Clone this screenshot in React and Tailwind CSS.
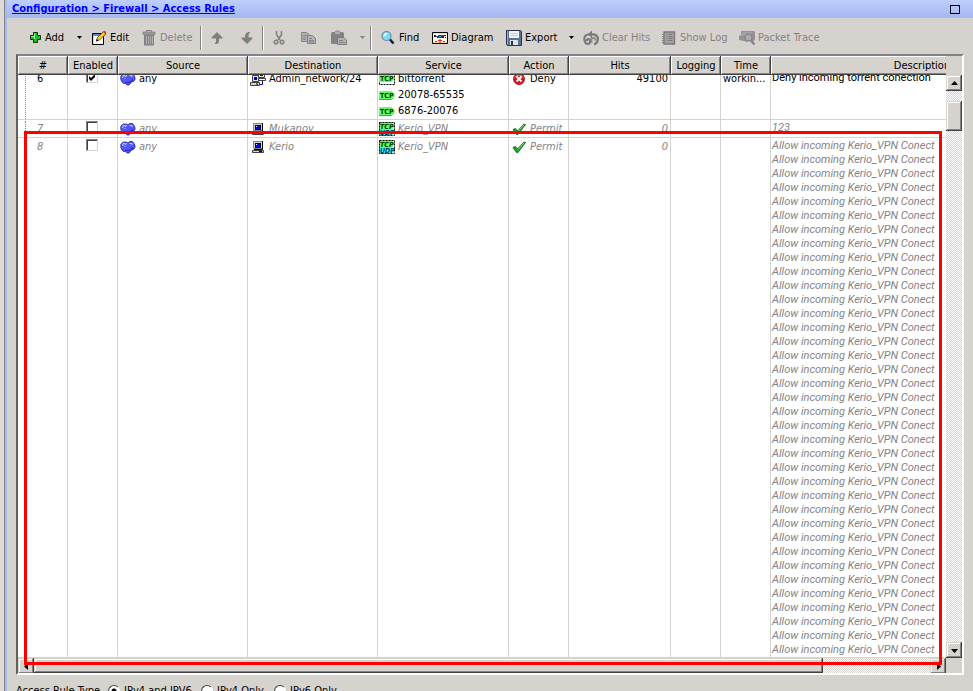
import React from 'react';

const columns = [
  { name: '#', width: 'w-[50px]' },
  { name: 'Enabled', width: 'w-[50px]' },
  { name: 'Source', width: 'w-[130px]' },
  { name: 'Destination', width: 'w-[130px]' },
  { name: 'Service', width: 'w-[131px]' },
  { name: 'Action', width: 'w-[60px]' },
  { name: 'Hits', width: 'w-[102px]' },
  { name: 'Logging', width: 'w-[50px]' },
  { name: 'Time', width: 'w-[50px]' },
  { name: 'Description', width: 'w-[302px]' },
];

const rules = [
  {
    id: 6,
    enabled: true,
    source: 'any',
    destination: { name: 'Admin_network/24', icon: 'network' },
    services: [
      { name: 'bittorrent', icon: 'group' },
      { name: '20078-65535', icon: 'tcp' },
      { name: '6876-20076', icon: 'tcp' },
    ],
    action: 'Deny',
    hits: 49100,
    time: 'workin...',
    description: ['Deny incoming torrent conection'],
  },
  {
    id: 7,
    enabled: false,
    source: 'any',
    destination: { name: 'Mukanov', icon: 'host' },
    services: [{ name: 'Kerio_VPN', icon: 'tcpudp' }],
    action: 'Permit',
    hits: 0,
    time: '',
    description: ['123'],
  },
  {
    id: 8,
    enabled: false,
    source: 'any',
    destination: { name: 'Kerio', icon: 'host' },
    services: [{ name: 'Kerio_VPN', icon: 'tcpudp' }],
    action: 'Permit',
    hits: 0,
    time: '',
    description: Array(37).fill('Allow incoming Kerio_VPN Conect'),
  },
];

const RAISED =
  'bg-[#d6d3ce] shadow-[inset_-1px_-1px_0_#424142,inset_1px_1px_0_#d6d3ce,inset_-2px_-2px_0_#848284,inset_2px_2px_0_#ffffff]';
const TRACK =
  'bg-[conic-gradient(#ffffff_25%,#d6d3ce_0_50%,#ffffff_0_75%,#d6d3ce_0)] bg-[length:2px_2px]';

function Icon({ children }) {
  return (
    <svg className="w-4 h-4 shrink-0" viewBox="0 0 16 16" fill="none" aria-hidden="true">
      {children}
    </svg>
  );
}

/* ---------- toolbar icons ---------- */

const AddIcon = () => (
  <Icon>
    <path d="M7.500 2.500h4v3h3v4h-3v3h-4v-3h-3v-4h3z" fill="#18c321" stroke="#003800" />
    <path d="M8.500 9V3.500M5.500 6.500h3" stroke="#9cff9c" />
  </Icon>
);

const EditIcon = () => (
  <Icon>
    <path d="M1.500 3.500h11v11h-11z" fill="#fff" stroke="#000" />
    <path d="M2 5h10" stroke="#4a8ee7" strokeWidth="2" />
    <path d="M2.500 6v8" stroke="#bddbff" />
    <path d="M4 13.500h8" stroke="#e7efff" />
    <path d="M5.500 10.500l1-3 6-6 2.500 2.500-6.500 6z" fill="#ffc731" stroke="#5a3a00" strokeWidth=".8" />
    <path d="M12 2l1.500-1.500 2 2L14 4z" fill="#c64a31" />
    <path d="M5 11.500l.8-2.500 1.700 1.700z" fill="#000" />
  </Icon>
);

const TrashIcon = () => (
  <Icon>
    <path d="M5.500 2.500v-2h5v2" stroke="#848284" />
    <path d="M2 2h12v2.500H2z" fill="#9c9a9c" stroke="#848284" strokeWidth=".8" />
    <path d="M3 5h10v10.500H3z" fill="#848284" />
    <path d="M5.500 6v8M7.500 6v8M9.500 6v8M11.500 6v8" stroke="#b5b2ad" />
  </Icon>
);

const UpIcon = () => (
  <Icon>
    <path d="M8 2l5.500 5.500v1H10V12c-.5 1.500-1.500 2-4 2v-1c1-.5 1-1 1-2V8.500H2.500v-1z" fill="#7b827b" />
  </Icon>
);

const DownIcon = () => (
  <Icon>
    <path d="M8 14L2.500 8.500v-1H6V6c.5-3 2-4 4-4h1v1C9.500 3.500 9.500 5 9.500 7.500h4v1z" fill="#7b827b" />
  </Icon>
);

const CutIcon = () => (
  <Icon>
    <path d="M5.500 1v3.500L9 10M10.500 1v3.500L7 10" stroke="#848284" strokeWidth="1.600" />
    <circle cx="5" cy="12" r="1.800" stroke="#848284" strokeWidth="1.500" />
    <circle cx="11" cy="12" r="1.800" stroke="#848284" strokeWidth="1.500" />
  </Icon>
);

const CopyIcon = () => (
  <Icon>
    <path d="M.5 2.500h5l3 2.500v6.500h-8z" fill="#b5b2b5" stroke="#848284" />
    <path d="M2 5.500h4M2 7.500h3M2 9.500h3" stroke="#848284" />
    <path d="M6.500 5.500h5l3 3v5h-8z" fill="#b5b2b5" stroke="#848284" />
    <path d="M8 8.500h3M8 10.500h5M8 12h5" stroke="#848284" />
  </Icon>
);

const PasteIcon = () => (
  <Icon>
    <path d="M0 3.500L1 2h11l1 1.500V13l-1 1H1l-1-1z" fill="#848284" />
    <path d="M3.500 2.500l2-1.500h2l2 1.500v2h-6z" fill="#b5b2b5" stroke="#848284" />
    <path d="M6.500 7.500h6l3 2.500v4.500h-9z" fill="#b5b2b5" stroke="#7b797b" />
    <path d="M8 10.500h4M8 12.500h6" stroke="#848284" />
  </Icon>
);

const FindIcon = () => (
  <Icon>
    <circle cx="6.500" cy="6" r="4.500" fill="#7bdbff" stroke="#6b8a94" strokeWidth="1.200" />
    <path d="M3.500 6.500A3 3 0 017 3l-1 2.500z" fill="#fff" />
    <path d="M10 9.500l3.500 4" stroke="#08243a" strokeWidth="2.500" />
  </Icon>
);

const DiagramIcon = () => (
  <Icon>
    <path d="M.5 2.500h15v11H.5z" fill="#fff7e7" stroke="#000" />
    <path d="M1 3.500h14M1 12.500h14" stroke="#ffd7a5" />
    <path d="M2 5h2v2H2zM5 7h1v1H5zM10 6h2v2h-2zM12 5h2v1h-2zM13 7h1v1h-1z" fill="#212021" />
    <path d="M4 6.500h2M10 5.500h2" stroke="#525152" />
    <path d="M6.500 5.500h3v2h-3z" fill="#31c6f7" stroke="#003863" />
    <path d="M3 11.500h2M6 10.500h4M11 11.500h2M8 9v4" stroke="#f02818" />
  </Icon>
);

const SaveIcon = () => (
  <Icon>
    <path d="M.5.5h14l1 1v14H1.500l-1-1z" fill="#5a7194" stroke="#29344a" />
    <path d="M1.500 1v13" stroke="#94aac6" />
    <path d="M3 1h10v7H3z" fill="#eff3f7" />
    <path d="M4.500 3.500h7M4.500 5.500h7" stroke="#c6cbd6" />
    <path d="M4 10h8v5H4z" fill="#dee3e7" />
    <path d="M5 11h2v4H5z" fill="#29344a" />
  </Icon>
);

const ClearHitsIcon = () => (
  <Icon>
    <path d="M4.500 4.500L9 .5v7z" fill="#7b797b" />
    <path d="M6 4.500C2 4.500 1 7 1.500 10c.5 3 2 4 3.500 4s2.500-1.500 2-3.500S4 8.500 3.500 11" stroke="#7b797b" strokeWidth="2.200" />
    <path d="M8.500 4.500c4-.5 6.500 1.500 6.300 4.500-.3 3-2 5-3.800 5" stroke="#7b797b" strokeWidth="2.400" />
    <path d="M8.500 7v6M9 8.500c1.500-1.500 3.500-.5 3 2" stroke="#8c8a8c" strokeWidth="1.800" />
  </Icon>
);

const LogIcon = () => (
  <Icon>
    <path d="M3 2h10.500v12H3z" fill="#a5a2a5" stroke="#7b797b" strokeWidth="1.400" />
    <path d="M1 4.500h3M1 6.500h3M1 8.500h3M1 10.500h3M1 12.500h3" stroke="#848284" />
    <path d="M5.500 4.500h1M7.500 4.500h4M5.500 6.500h1M7.500 6.500h4M5.500 8.500h1M7.500 8.500h4M5.500 10.500h1M7.500 10.500h4" stroke="#7b797b" />
  </Icon>
);

const TraceIcon = () => (
  <Icon>
    <path d="M2 1h13l1 1v8l-2 1H9l-1 1-3-1-5-1V6l2-1z" fill="#949294" />
    <path d="M1 6l3-4h10l-3 4z" fill="#a5a2a5" />
    <circle cx="9.500" cy="7.500" r="3.500" fill="#adaaad" stroke="#848284" strokeWidth="1.200" />
    <path d="M12 10.500l3.500 4" stroke="#848284" strokeWidth="2.500" />
  </Icon>
);

/* ---------- table icons ---------- */

const AnyIcon = () => (
  <Icon>
    <path
      d="M3.500 3h3l1.500 1 1.500-1.500h3L14 4.500l1 2v2l-1.500 2-2 .5L9 14H7l-1.500-1.500h-2L2 11 .800 8.500v-3L2 4z"
      fill="#5255f7"
      stroke="#2124a5"
      strokeWidth=".8"
    />
    <path d="M2 6.500h1v-2h2v1h1v-1h1M4.500 7.500h1M9.500 4.500h3M11.500 5.500h1" stroke="#bdc7ff" />
    <path d="M5 11.500h5l3-3" stroke="#2928c6" strokeWidth="1.200" />
  </Icon>
);

const HostIcon = () => (
  <Icon>
    <path d="M3.500 2.500h9v7h-9z" fill="#d6d3ce" stroke="#848284" />
    <path d="M12.500 2v8.500H4" stroke="#000" />
    <path d="M5 4h6v5H5z" fill="#000" />
    <path d="M6 5h4v3H6z" fill="#0000ff" />
    <path d="M6 5h1v1H6z" fill="#fff" />
    <path d="M2.500 11.500h11v2h-11z" fill="#d6d3ce" stroke="#424142" />
    <path d="M9 12.500h3" stroke="#000" />
  </Icon>
);

const NetworkIcon = () => (
  <Icon>
    <path d="M8.500.5h6v6h-6z" fill="#e7e7e7" stroke="#424142" />
    <path d="M10 2h3v3h-3z" fill="#0000d6" />
    <path d="M8.500 7.500h7v2h-7z" fill="#fff" stroke="#424142" />
    <path d="M12.500 10v3.500H10" stroke="#0808c6" />
    <path d="M2.500 4.500h6v6h-6z" fill="#e7e7e7" stroke="#424142" />
    <path d="M4 6h3v3H4z" fill="#0000d6" />
    <path d="M.5 11.500h9v3h-9z" fill="#d6d3ce" stroke="#424142" />
    <path d="M6 13h2" stroke="#000" />
  </Icon>
);

function Tag({ label, y, fill, color }) {
  return (
    <>
      <path d={`M0 ${y}h12.500l3.500 4-3.500 4H0z`} fill={fill} />
      <text x="1" y={y + 7} fontSize="7" fontWeight="bold" fontFamily="DejaVu Sans Condensed" fill={color}>
        {label}
      </text>
    </>
  );
}

const TcpIcon = () => (
  <Icon>
    <path d="M0 12.500h12.500l3-4" stroke="#31b531" />
    <Tag label="TCP" y={4} fill="#63ff63" color="#003800" />
  </Icon>
);

const GroupIcon = () => (
  <Icon>
    <path d="M.5 1.500h15v12H.5z" fill="#fff" stroke="#000" strokeDasharray="2 1" />
    <Tag label="TCP" y={3} fill="#63ff63" color="#003800" />
  </Icon>
);

const TcpUdpIcon = () => (
  <Icon>
    <path d="M0 0h16v16H0z" fill="#fff" />
    <Tag label="UDP" y={7} fill="#42f7ff" color="#00415a" />
    <Tag label="TCP" y={1} fill="#63ff63" color="#003800" />
    <path d="M.5 1.500h15v13H.5z" stroke="#000" strokeDasharray="2 1" />
  </Icon>
);

const DenyIcon = () => (
  <Icon>
    <circle cx="8" cy="8" r="5.500" fill="#d61818" stroke="#8c1010" strokeWidth=".8" />
    <path d="M4 6.500a4.500 4.500 0 018 0" stroke="#f78c84" />
    <path d="M5.500 5.500l5 5M10.500 5.500l-5 5" stroke="#fff" strokeWidth="1.800" />
  </Icon>
);

const PermitIcon = () => (
  <Icon>
    <path d="M2 8.500l2.500-1 2 2.500L13 3l1.500.5L7 13.500H5.500z" fill="#21a529" stroke="#085a10" strokeWidth=".8" />
    <path d="M7 10.500l6-6.500" stroke="#8ce78c" strokeWidth=".8" />
  </Icon>
);

const serviceIcons = { tcp: TcpIcon, group: GroupIcon, tcpudp: TcpUdpIcon };

/* ---------- toolbar ---------- */

function ToolButton({ icon: IconComponent, label, title, width, disabled }) {
  return (
    <button
      type="button"
      disabled={disabled}
      aria-label={title}
      className={`flex items-center gap-[3px] h-6 shrink-0 whitespace-nowrap disabled:text-[#848284] ${label ? '' : 'justify-center'} ${width}`}
    >
      <IconComponent />
      {label}
    </button>
  );
}

function DropButton({ title, disabled }) {
  return (
    <button
      type="button"
      disabled={disabled}
      aria-label={title}
      className="flex items-center justify-center w-4 h-6 shrink-0 disabled:text-[#848284]"
    >
      <svg className="w-[5px] h-[3px]" viewBox="0 0 5 3" aria-hidden="true">
        <path d="M0 0h5L2.500 3z" fill="currentColor" />
      </svg>
    </button>
  );
}

const Separator = () => <div className="w-[2px] h-6 shrink-0 bg-[#848284] border-r border-white" />;

function Toolbar() {
  return (
    <div className="flex items-center h-9 pl-[19px] pt-[3px]">
      <ToolButton icon={AddIcon} label="Add" width="w-[45px]" />
      <DropButton title="Add options" />
      <ToolButton icon={EditIcon} label="Edit" width="ml-1 w-[50px]" />
      <ToolButton icon={TrashIcon} label="Delete" width="w-[59px]" disabled />
      <Separator />
      <ToolButton icon={UpIcon} title="Move up" width="w-[30px]" disabled />
      <ToolButton icon={DownIcon} title="Move down" width="w-[30px]" disabled />
      <Separator />
      <ToolButton icon={CutIcon} title="Cut" width="w-[30px]" disabled />
      <ToolButton icon={CopyIcon} title="Copy" width="w-[30px]" disabled />
      <ToolButton icon={PasteIcon} title="Paste" width="w-[30px]" disabled />
      <DropButton title="Paste options" disabled />
      <Separator />
      <ToolButton icon={FindIcon} label="Find" width="ml-2 w-[52px]" />
      <ToolButton icon={DiagramIcon} label="Diagram" width="w-[74px]" />
      <ToolButton icon={SaveIcon} label="Export" width="w-[57px]" />
      <DropButton title="Export options" />
      <ToolButton icon={ClearHitsIcon} label="Clear Hits" width="ml-1 w-[78px]" disabled />
      <ToolButton icon={LogIcon} label="Show Log" width="w-[78px]" disabled />
      <ToolButton icon={TraceIcon} label="Packet Trace" width="w-[90px]" disabled />
    </div>
  );
}

/* ---------- rules table ---------- */

function ColGroup() {
  return (
    <colgroup>
      {columns.map((col) => (
        <col key={col.name} className={col.width} />
      ))}
    </colgroup>
  );
}

function Entry({ icon: IconComponent, children }) {
  return (
    <div className="flex items-center gap-[3px] h-4 whitespace-nowrap">
      <IconComponent />
      {children}
    </div>
  );
}

function RuleRow({ rule }) {
  const cell = `align-top border-r border-b border-[#d6d3ce] ${rule.enabled ? 'pt-0' : 'pt-px'}`;
  return (
    <tr className={rule.enabled ? '' : 'italic text-[#848284]'}>
      <td className={`${cell} h-px pl-[7px]`}>
        <div className={`h-full pl-[11px] leading-4 ${rule.id < 8 ? 'border-l border-dotted border-[#848284]' : 'ml-px'}`}>
          {rule.id}
        </div>
      </td>
      <td className={`${cell} pr-px`}>
        <label className="relative block w-3 h-3 mx-auto">
          <input
            type="checkbox"
            defaultChecked={rule.enabled}
            aria-label={`Enable rule ${rule.id}`}
            className="peer block appearance-none w-3 h-3 bg-white border border-[#d6d3ce] border-t-[#848284] border-l-[#848284] shadow-[inset_1px_1px_0_#424142]"
          />
          <svg className="absolute inset-0 hidden peer-checked:block" viewBox="0 0 12 12" aria-hidden="true">
            <path d="M3 5v3l2 2 4-4V3L5 7z" fill="#000" />
          </svg>
        </label>
      </td>
      <td className={`${cell} pl-[2px]`}>
        <Entry icon={AnyIcon}>{rule.source}</Entry>
      </td>
      <td className={`${cell} pl-[2px]`}>
        <Entry icon={rule.destination.icon === 'host' ? HostIcon : NetworkIcon}>{rule.destination.name}</Entry>
      </td>
      <td className={`${cell} pl-px`}>
        {rule.services.map((service) => (
          <Entry key={service.name} icon={serviceIcons[service.icon]}>
            {service.name}
          </Entry>
        ))}
      </td>
      <td className={`${cell} pl-[2px]`}>
        <Entry icon={rule.action === 'Deny' ? DenyIcon : PermitIcon}>{rule.action}</Entry>
      </td>
      <td className={`${cell} pr-[2px] text-right leading-4`}>{rule.hits}</td>
      <td className={cell}></td>
      <td className={`${cell} pl-[2px] leading-4 whitespace-nowrap`}>{rule.time}</td>
      <td className={`${cell} pl-px leading-[14px] font-[Roboto,sans-serif]`}>
        {rule.description.map((line, i) => (
          <div key={i} className="whitespace-nowrap">{line}</div>
        ))}
      </td>
    </tr>
  );
}

function ScrollButton({ title, path }) {
  return (
    <button type="button" aria-label={title} className={`flex items-center justify-center w-4 h-4 shrink-0 ${RAISED}`}>
      <svg className="w-[7px] h-[7px]" viewBox="0 0 7 7" aria-hidden="true">
        <path d={path} fill="#000" />
      </svg>
    </button>
  );
}

function RulesTable() {
  return (
    <div className="relative border-2 border-t-[#848284] border-l-[#63615a] border-r-white border-b-white">
      <div className="flex">
        <div className="flex-1 min-w-0 overflow-hidden">
          <table className="relative z-10 table-fixed w-[1055px] border-separate border-spacing-0">
            <ColGroup />
            <thead>
              <tr>
                {columns.map((col) => (
                  <th
                    key={col.name}
                    className="h-[19px] p-0 font-normal text-center bg-[#d6d3ce] shadow-[inset_-1px_-1px_0_#424142,inset_1px_1px_0_#ffffff,inset_-2px_-2px_0_#848284]"
                  >
                    {col.name}
                  </th>
                ))}
              </tr>
            </thead>
          </table>
          {/* list is scrolled a few pixels under the header */}
          <table className="-mt-1 table-fixed w-[1055px] border-separate border-spacing-0 bg-white">
            <ColGroup />
            <tbody>
              {rules.map((rule) => (
                <RuleRow key={rule.id} rule={rule} />
              ))}
            </tbody>
          </table>
        </div>
        <div className={`flex flex-col w-4 shrink-0 border-t-[19px] border-[#d6d3ce] ${TRACK}`}>
          <ScrollButton title="Scroll up" path="M0 5h7L3.500 1z" />
          <div className={`mt-[10px] h-[30px] ${RAISED}`} />
          <div className="flex-1" />
          <ScrollButton title="Scroll down" path="M0 2h7L3.500 6z" />
        </div>
      </div>
      <div className="flex h-[15px] overflow-hidden">
        <div className={`flex flex-1 ${TRACK}`}>
          <ScrollButton title="Scroll left" path="M5 0v7L1 3.500z" />
          <div className={`w-[85%] ${RAISED}`} />
          <div className="flex-1" />
          <ScrollButton title="Scroll right" path="M2 0v7l4-3.500z" />
        </div>
        <div className="w-4 shrink-0 bg-[#d6d3ce]" />
      </div>
      {/* highlight around rule 8 */}
      <div className="absolute z-20 top-[75px] bottom-2 left-[6px] right-5 border-[3px] border-[#ff0000] pointer-events-none" />
    </div>
  );
}

function RuleType() {
  const options = [
    { name: 'IPv4 and IPV6', width: 'w-[93px]' },
    { name: 'IPv4 Only', width: 'w-[73px]' },
    { name: 'IPv6 Only', width: 'w-[73px]' },
  ];
  return (
    <fieldset className="flex items-center mt-2 h-4 whitespace-nowrap">
      <legend className="float-left w-[92px]">Access Rule Type</legend>
      {options.map((option, i) => (
        <label key={option.name} className={`flex items-center gap-1 ${option.width}`}>
          <input
            type="radio"
            name="rule-type"
            defaultChecked={i === 0}
            className="appearance-none w-3 h-3 shrink-0 rounded-full bg-white border border-white border-t-[#424142] border-l-[#424142] checked:bg-[radial-gradient(circle,#000_2px,#fff_3px)]"
          />
          {option.name}
        </label>
      ))}
    </fieldset>
  );
}

export default function App() {
  return (
    <div className="flex h-screen overflow-hidden bg-[#d6d3ce] text-black text-[11px] leading-4 font-['DejaVu_Sans_Condensed','DejaVu_Sans',sans-serif]">
      <div className="w-[7px] shrink-0 bg-[#a5baef] border-l-4 border-[#dedbd6]">
        <div className="w-px h-full bg-[#848284]" />
      </div>
      <main className="flex-1 min-w-0">
        <header className="flex items-center justify-between h-[18px] pl-[5px] pr-[13px] bg-linear-to-b from-[#bdcfff] to-[#a5b6ef]">
          <a href="#rules" className="font-bold text-[#0000ff] underline whitespace-nowrap">
            Configuration &gt; Firewall &gt; Access Rules
          </a>
          <button type="button" aria-label="Maximize" className="w-[10px] h-[9px] border border-black" />
        </header>
        <Toolbar />
        <div id="rules" className="px-[9px]">
          <RulesTable />
          <RuleType />
        </div>
      </main>
    </div>
  );
}
